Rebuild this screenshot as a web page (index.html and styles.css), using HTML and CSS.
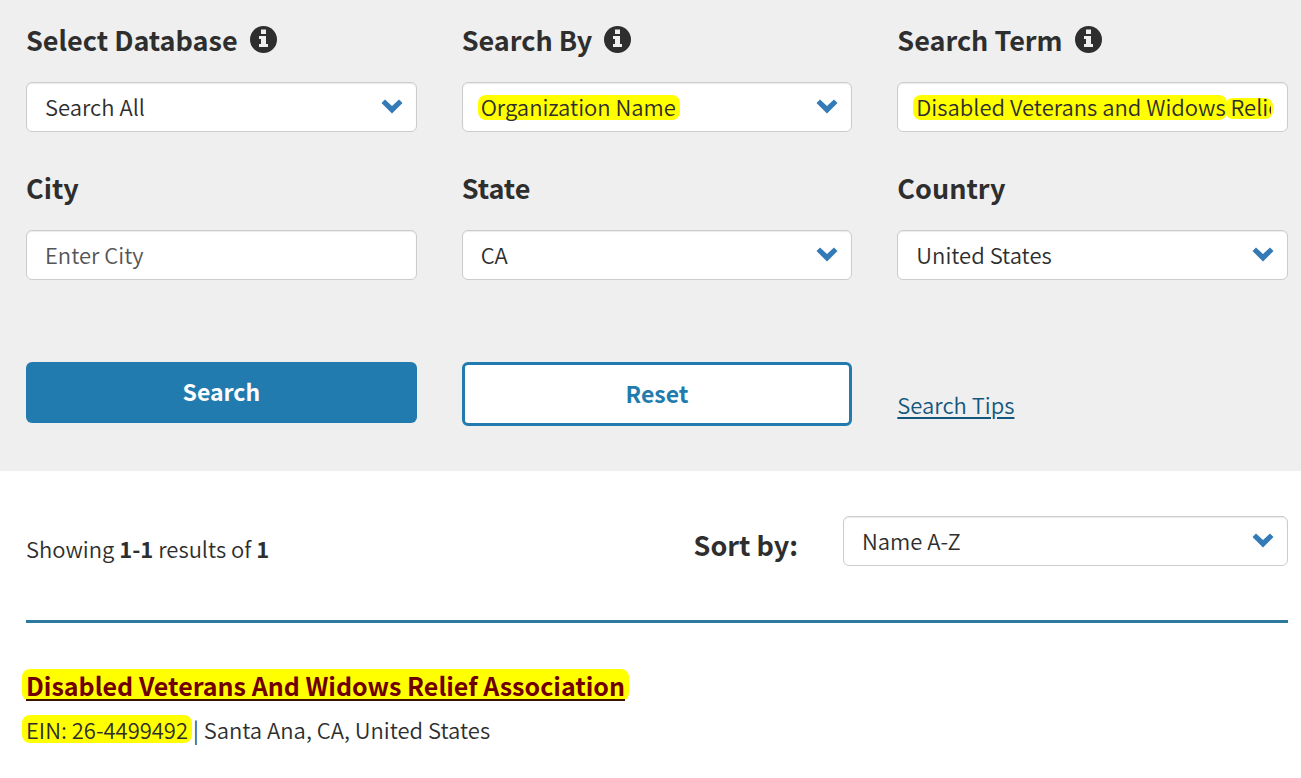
FILE: index.html
```html
<!DOCTYPE html>
<html lang="en">
<head>
  <meta charset="UTF-8" />
  <meta name="viewport" content="width=device-width, initial-scale=1" />
  <title>Tax Exempt Organization Search</title>
  <link rel="stylesheet" href="styles.css">
</head>
<body>
  <!-- shared icons -->
  <svg class="sprite" aria-hidden="true">
    <symbol id="info" viewBox="0 0 27 27">
      <circle cx="13.5" cy="13.5" r="13.5" />
      <path fill="#efefef" d="M11 3.500h5v4.500h-5zM9 10h7v8h2v3H9v-3h2v-5H9z" />
    </symbol>
    <symbol id="chevron" viewBox="0 0 22 15">
      <path d="M4 .5 11 7 18 .5 21.500 4 11 14.500.5 4z" />
    </symbol>
  </svg>

  <form class="searchPanel">
    <div class="grid">
      <div class="field">
        <div class="labelRow">
          <label for="database">Select Database</label>
          <button type="button" class="infoBtn" aria-label="About databases"><svg><use href="#info" /></svg></button>
        </div>
        <div class="control">
          <select id="database" name="database">
            <option>Search All</option>
          </select>
          <svg class="chevron"><use href="#chevron" /></svg>
        </div>
      </div>

      <div class="field">
        <div class="labelRow">
          <label for="searchBy">Search By</label>
          <button type="button" class="infoBtn" aria-label="About search by"><svg><use href="#info" /></svg></button>
        </div>
        <div class="control">
          <span class="marker markerName"></span>
          <select id="searchBy" name="searchBy">
            <option>Organization Name</option>
          </select>
          <svg class="chevron"><use href="#chevron" /></svg>
        </div>
      </div>

      <div class="field">
        <div class="labelRow">
          <label for="term">Search Term</label>
          <button type="button" class="infoBtn" aria-label="About search term"><svg><use href="#info" /></svg></button>
        </div>
        <div class="control">
          <span class="marker markerTerm"></span>
          <span class="marker markerTermEnd"></span>
          <input type="text" id="term" name="term" value="Disabled Veterans and Widows Relief Association" />
        </div>
      </div>

      <div class="field">
        <div class="labelRow"><label for="city">City</label></div>
        <div class="control">
          <input type="text" id="city" name="city" placeholder="Enter City" />
        </div>
      </div>

      <div class="field">
        <div class="labelRow"><label for="state">State</label></div>
        <div class="control">
          <select id="state" name="state">
            <option>CA</option>
          </select>
          <svg class="chevron"><use href="#chevron" /></svg>
        </div>
      </div>

      <div class="field">
        <div class="labelRow"><label for="country">Country</label></div>
        <div class="control">
          <select id="country" name="country">
            <option>United States</option>
          </select>
          <svg class="chevron"><use href="#chevron" /></svg>
        </div>
      </div>
    </div>

    <div class="grid actions">
      <button type="submit" class="btn btnPrimary">Search</button>
      <button type="reset" class="btn btnOutline">Reset</button>
      <a class="tips" href="#tips">Search Tips</a>
    </div>
  </form>

  <main class="results">
    <div class="resultsBar">
      <p class="count">Showing <b>1-1</b> results of <b>1</b></p>
      <label for="sort">Sort by:</label>
      <div class="control sortControl">
        <select id="sort" name="sort">
          <option>Name A-Z</option>
        </select>
        <svg class="chevron"><use href="#chevron" /></svg>
      </div>
    </div>

    <article class="result">
      <h3><mark><a href="#result">Disabled Veterans And Widows Relief Association</a></mark></h3>
      <p><mark>EIN: 26-4499492</mark> | Santa Ana, CA, United States</p>
    </article>
  </main>
</body>
</html>
```
FILE: styles.css
```css
* {
  box-sizing: border-box;
}
body {
  margin: 0;
  background: #fff;
  color: #2e2e2e;
  font-family: "Noto Sans CJK SC", "Open Sans", sans-serif;
  font-size: 22px;
  font-weight: 350;
  line-height: 32px;
}
h3, p {
  margin: 0;
}
b {
  font-weight: bold;
}
.sprite {
  position: absolute;
  width: 0;
  height: 0;
}

/* search form */
.searchPanel {
  padding: 24px 13px 45px 26px;
  background: #efefef;
}
.grid {
  display: grid;
  grid-template-columns: repeat(3, 1fr);
  gap: 40px 45px;
}
.field {
  min-width: 0;
}
.labelRow {
  display: flex;
  gap: 12px;
  margin-bottom: 26px;
}
label {
  font-size: 27px;
  font-weight: bold;
}
.infoBtn {
  width: 27px;
  height: 27px;
  margin-top: 2px;
  padding: 0;
  border: none;
  background: none;
  color: #2e2e2e;
  cursor: pointer;
}
.infoBtn svg {
  display: block;
  width: 27px;
  height: 27px;
  fill: currentColor;
}
.control {
  position: relative;
  height: 50px;
  border: 1px solid #ccc;
  border-radius: 6px;
  background: #fff;
  box-shadow: inset 0 1px 1px rgba(0, 0, 0, 0.08);
}
.control select,
.control input {
  position: relative;
  display: block;
  width: 100%;
  height: 48px;
  padding: 0 16px 3px 18px;
  border: none;
  background: none;
  color: #2e2e2e;
  font: inherit;
  appearance: none;
}
.control input::placeholder {
  color: #555;
  opacity: 1;
}
.chevron {
  position: absolute;
  top: 16px;
  right: 13px;
  width: 22px;
  height: 15px;
  fill: #337ab7;
  pointer-events: none;
}

/* yellow highlighter behind field values */
.marker {
  position: absolute;
  top: 12px;
  left: 15px;
  height: 25px;
  border-radius: 8px;
  background: #ff0;
}
.markerName {
  width: 202px;
}
.markerTerm {
  width: 314px;
}
.markerTermEnd {
  top: 15px;
  right: 14px;
  left: auto;
  width: 48px;
  height: 21px;
}

.actions {
  align-items: start;
  margin-top: 82px;
}
.btn {
  height: 61px;
  padding: 0 0 3px;
  border: none;
  border-radius: 6px;
  font: inherit;
  font-size: 23px;
  font-weight: bold;
  cursor: pointer;
}
.btnPrimary {
  background: #227bae;
  color: #fff;
}
.btnOutline {
  height: 64px;
  border: 3px solid #227bae;
  background: #fff;
  color: #227bae;
}
.tips {
  justify-self: start;
  margin-top: 26px;
  color: #14577d;
  text-decoration-thickness: 2px;
  text-underline-offset: 3px;
}

/* results */
.results {
  padding: 45px 13px 24px 26px;
}
.resultsBar {
  display: flex;
  align-items: center;
  padding-bottom: 54px;
  border-bottom: 3px solid #2c7a9f;
}
.count {
  flex: 1;
  padding-top: 14px;
}
.resultsBar label {
  margin: 7px 45px 0 0;
}
.sortControl {
  width: 445px;
}
.result {
  padding-top: 46px;
}
.result h3 {
  margin-bottom: 12px;
  font-size: 25px;
}
.result a {
  color: #700000;
  text-decoration: underline 2px #3c1400;
  text-underline-offset: 3px;
}
mark {
  display: inline-block;
  margin: 0 -4px;
  padding: 0 4px;
  border-radius: 8px;
  background: #ff0;
  color: inherit;
}
.result p mark {
  line-height: 28px;
}
```
